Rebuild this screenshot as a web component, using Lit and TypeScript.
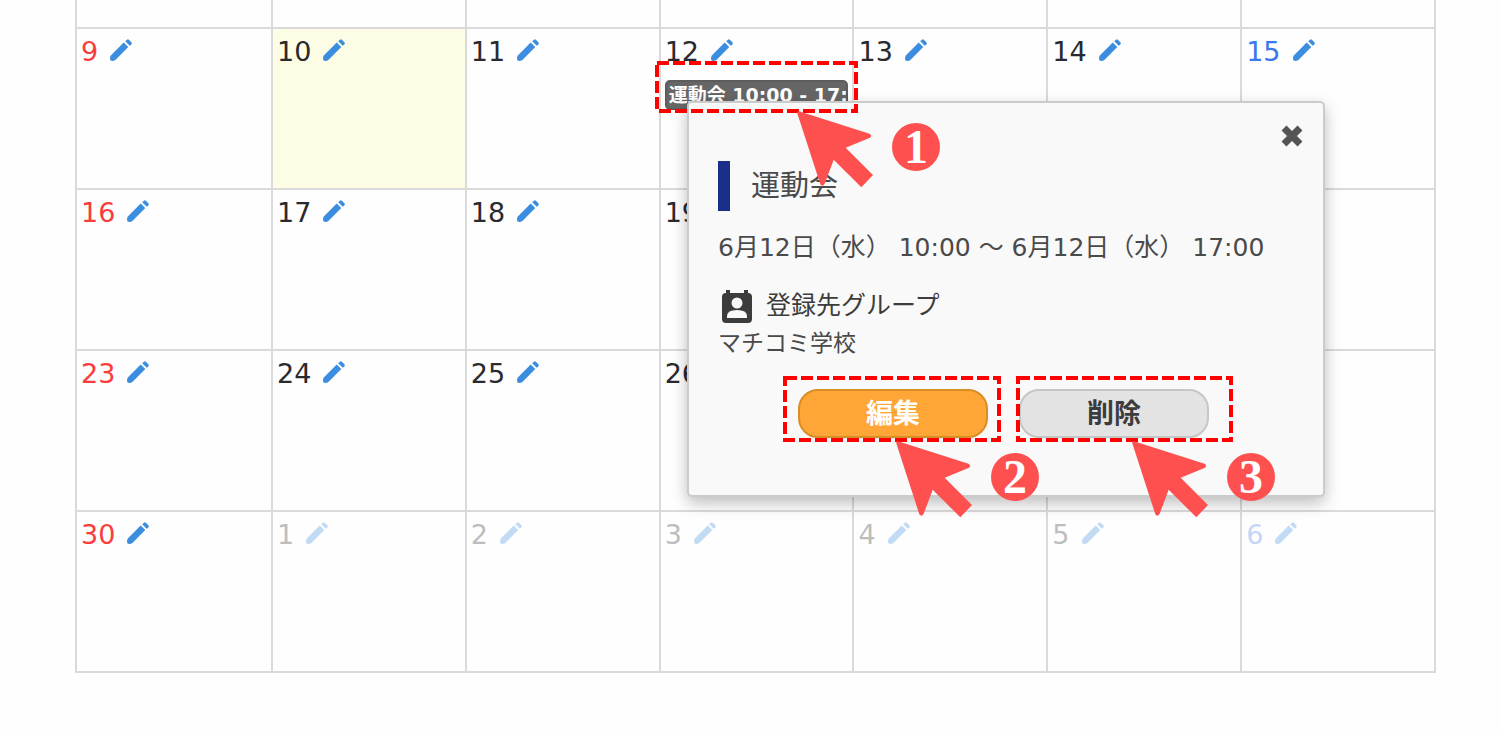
import { LitElement, html, svg, css, nothing } from "lit";
import { customElement, property } from "lit/decorators.js";

interface Day {
  n: number;
  other?: boolean;
  today?: boolean;
  event?: string;
}

const days = (from: number, extra: Record<number, Partial<Day>> = {}): Day[] =>
  Array.from({ length: 7 }, (_, i) => ({ n: from + i, ...extra[from + i] }));

const WEEKS: Day[][] = [
  days(9, { 10: { today: true }, 12: { event: "運動会 10:00 - 17:" } }),
  days(16),
  days(23),
  [{ n: 30 }, ...[1, 2, 3, 4, 5, 6].map((n) => ({ n, other: true }))],
];

@customElement("month-grid")
class MonthGrid extends LitElement {
  static styles = css`
    :host { display: block; }
    .grid { width: 100%; border-collapse: collapse; table-layout: fixed; }
    .first { width: 196px; }
    .cell { height: 161px; box-sizing: border-box; padding: 6px 4px 0; border: 2px solid #dadada; vertical-align: top; }
    .rest { height: 28px; padding: 0; border-top: 0; }
    .today { background: #fdfde6; }
    .head { display: flex; align-items: center; gap: 12px; font-size: 27px; line-height: 34px; color: #2a2a2e; }
    .sun { color: #f93c3c; }
    .sat { color: #3a78ee; }
    .other { opacity: 0.3; }
    .edit { display: block; width: 22px; height: 26px; padding: 0 0 4px; border: 0; background: none; color: #3b8de0; }
    .edit svg { display: block; }
    .event {
      display: block; width: 100%; height: 30px; margin-top: 11px; padding: 0 2px;
      box-sizing: border-box; border: 2px solid #5c5c5c; border-radius: 5px; background: #666; color: #fff;
      font: bold 19px/24px "DejaVu Sans", "Noto Sans CJK JP", sans-serif;
      text-align: left; white-space: nowrap; overflow: hidden;
    }
  `;

  private cell(d: Day, col: number) {
    const tone = col === 0 ? "sun" : col === 6 ? "sat" : "";
    return html`<td class="cell ${d.today ? "today" : ""}">
      <div class="head ${tone} ${d.other ? "other" : ""}">
        <span>${d.n}</span>
        <button class="edit" aria-label="${d.n}日に予定を追加">
          <svg width="22" height="22" viewBox="0 0 22 22" fill="currentColor" aria-hidden="true">
            <path d="M.8 16.400 13.700 3.600 18.300 8 5.400 20.900Q4 22 2.200 22 0 22 0 19.800 0 17.600 .8 16.400Z" />
            <path d="M15.200 2.300 16.900 .700Q17.900 0 18.900 .700L21.400 3.200Q22.200 4.200 21.400 5.200L19.800 6.800Z" />
          </svg>
        </button>
      </div>
      ${d.event ? html`<button class="event">${d.event}</button>` : nothing}
    </td>`;
  }

  render() {
    return html`<table class="grid">
      <colgroup><col class="first" /><col span="6" /></colgroup>
      <tbody>
        <tr>${WEEKS[0].map(() => html`<td class="cell rest"></td>`)}</tr>
        ${WEEKS.map((w) => html`<tr>${w.map((d, i) => this.cell(d, i))}</tr>`)}
      </tbody>
    </table>`;
  }
}

@customElement("event-popup")
class EventPopup extends LitElement {
  static styles = css`
    :host {
      display: block; box-sizing: border-box; padding: 18px 16px 57px 29px;
      border: 2px solid #cbcbcb; border-radius: 5px; background: #f9f9f9; color: #4a4a4a;
      box-shadow: 0 6px 16px rgba(0, 0, 0, 0.26);
      font: 25px/34px "DejaVu Sans", "Noto Sans CJK JP", sans-serif;
    }
    .close { display: block; margin: 0 0 0 auto; padding: 4px; border: 0; background: none; color: #555; }
    .close svg, .icon { display: block; }
    .title {
      margin: 10px 0 0; padding-left: 21px; border-left: 12px solid #1a2f8a;
      font-size: 29px; line-height: 50px; font-weight: 400;
    }
    .when { margin: 20px 0 0; white-space: nowrap; }
    .label { display: flex; align-items: center; gap: 14px; margin: 23px 0 0 4px; font-size: 25px; line-height: 36px; font-weight: 400; color: #3c3c3c; }
    .group { margin: 2px 0 0; font-size: 23px; }
    .actions { display: flex; gap: 31px; margin: 29px 0 0 80px; }
    .btn {
      width: 190px; height: 49px; padding: 0 0 4px; border: 2px solid #d98d25; border-radius: 20px;
      background: #ffa636; color: #fff; font: bold 27px/40px "Noto Sans CJK JP", sans-serif;
    }
    .plain { border-color: #c6c6c6; background: #e3e3e3; color: #3c3c3c; }
  `;

  render() {
    return html`
      <button class="close" aria-label="閉じる">
        <svg width="22" height="22" viewBox="0 0 22 22" stroke="currentColor" stroke-width="7" aria-hidden="true">
          <path d="M3 3 19 19M19 3 3 19" />
        </svg>
      </button>
      <h2 class="title">運動会</h2>
      <p class="when">6月12日（水） 10:00 ～ 6月12日（水） 17:00</p>
      <h3 class="label">
        <svg class="icon" width="30" height="33" viewBox="0 0 30 33" aria-hidden="true">
          <path fill="#3c3c3c" d="M4 0h4v3h14V0h4v3q4 0 4 4v22q0 4-4 4H4q-4 0-4-4V7q0-4 4-4Z" />
          <circle cx="15" cy="13" r="5.500" fill="#f9f9f9" />
          <path fill="#f9f9f9" d="M5 28v-2q0-6 10-6t10 6v2Z" />
        </svg>
        登録先グループ
      </h3>
      <p class="group">マチコミ学校</p>
      <div class="actions">
        <button class="btn">編集</button>
        <button class="btn plain">削除</button>
      </div>`;
  }
}

@customElement("step-mark")
class StepMark extends LitElement {
  @property({ type: Number }) step = 1;

  static styles = css`
    :host { display: flex; align-items: flex-start; gap: 18px; color: #ff5050; }
    .arrow { display: block; }
    .num {
      width: 48px; height: 48px; margin-top: 12px; border-radius: 50%; background: #ff5050; color: #fff;
      font: bold 48px/48px "Liberation Serif", serif; text-align: center;
    }
  `;

  render() {
    return html`
      <svg class="arrow" width="77" height="77" viewBox="0 0 77 77" fill="currentColor" aria-hidden="true">
        ${svg`<path d="M2 .3 72.500 22.800Q75.500 24.500 73 26.800L48.700 36.700 76 64 64.300 76.300 36.700 48.700 27.600 73Q25.500 76 23.400 73.500L.2 2Q0 0 2 .3Z" />`}
      </svg>
      <span class="num">${this.step}</span>`;
  }
}

@customElement("app-root")
class AppRoot extends LitElement {
  static styles = css`
    :host { display: block; background: #fefefe; font-family: "DejaVu Sans", "Noto Sans CJK JP", sans-serif; }
    .page { position: relative; min-height: 100vh; box-sizing: border-box; padding: 0 64px 48px 75px; }
    .popup { position: absolute; left: 687px; top: 101px; width: 638px; }
    .frame { position: absolute; }
    .frame rect { fill: none; stroke: #f00; stroke-width: 4; stroke-dasharray: 12 4; }
    .f1 { left: 655px; top: 61px; }
    .f2 { left: 783px; top: 376px; }
    .f3 { left: 1016px; top: 376px; }
    .mark { position: absolute; }
    .m1 { left: 797px; top: 111px; }
    .m2 { left: 896px; top: 441px; }
    .m3 { left: 1132px; top: 441px; }
  `;

  private frame(name: string, w: number, h: number) {
    return html`<svg class="frame ${name}" width=${w} height=${h} aria-hidden="true">
      <rect x="2" y="2" width=${w - 4} height=${h - 4} />
    </svg>`;
  }

  render() {
    return html`<main class="page">
      <month-grid></month-grid>
      <event-popup class="popup" role="dialog" aria-label="運動会"></event-popup>
      ${this.frame("f1", 203, 52)} ${this.frame("f2", 218, 66)} ${this.frame("f3", 217, 66)}
      <step-mark class="mark m1" .step=${1}></step-mark>
      <step-mark class="mark m2" .step=${2}></step-mark>
      <step-mark class="mark m3" .step=${3}></step-mark>
    </main>`;
  }
}
